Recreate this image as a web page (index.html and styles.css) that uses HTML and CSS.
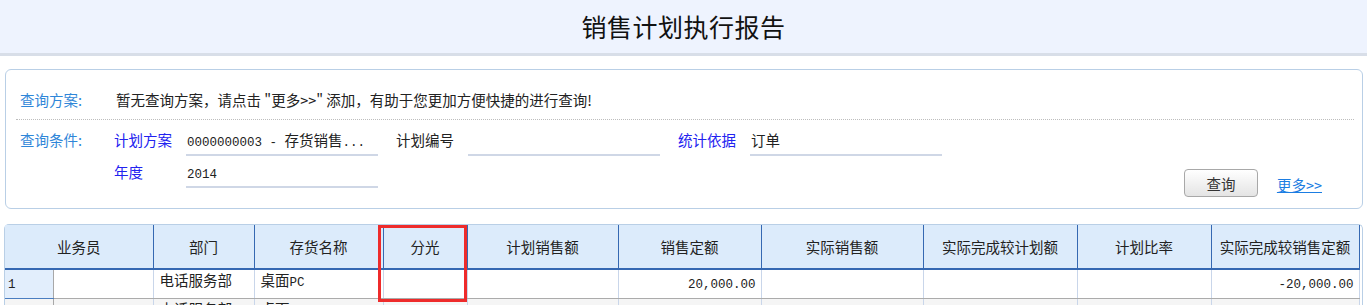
FILE: index.html
```html
<!DOCTYPE html>
<html lang="zh-CN">
<head>
    <meta charset="UTF-8">
    <meta name="viewport" content="width=device-width, initial-scale=1.0">
    <title>销售计划执行报告</title>
    <link rel="stylesheet" href="styles.css">
</head>
<body>
    <div class="report-title">销售计划执行报告</div>

    <div class="query-panel">
        <div class="query-scheme">
            <span class="query-label">查询方案:</span>
            <span class="scheme-tip">暂无查询方案，请点击 "更多&gt;&gt;" 添加，有助于您更加方便快捷的进行查询!</span>
        </div>

        <div class="query-conditions">
            <span class="query-label">查询条件:</span>
            <div class="fields">
                <div class="field-row">
                    <div class="field">
                        <span class="field-label key">计划方案</span>
                        <span class="field-value"><span class="num">0000000003 - </span>存货销售<span class="num">...</span></span>
                    </div>
                    <div class="field">
                        <span class="field-label">计划编号</span>
                        <span class="field-value"></span>
                    </div>
                    <div class="field">
                        <span class="field-label key">统计依据</span>
                        <span class="field-value">订单</span>
                    </div>
                </div>
                <div class="field-row">
                    <div class="field">
                        <span class="field-label key">年度</span>
                        <span class="field-value"><span class="num">2014</span></span>
                    </div>
                </div>
            </div>
            <div class="query-actions">
                <button class="query-btn">查询</button>
                <a href="#" class="more-link">更多&gt;&gt;</a>
            </div>
        </div>
    </div>

    <div class="report-table-wrap">
        <table class="report-table">
            <colgroup>
                <col style="width: 48px">
                <col style="width: 100px">
                <col style="width: 101px">
                <col style="width: 129px">
                <col style="width: 84px">
                <col style="width: 151px">
                <col style="width: 143px">
                <col style="width: 162px">
                <col style="width: 154px">
                <col style="width: 134px">
                <col style="width: 148px">
            </colgroup>
            <thead>
                <tr>
                    <th colspan="2">业务员</th>
                    <th>部门</th>
                    <th>存货名称</th>
                    <th>分光</th>
                    <th>计划销售额</th>
                    <th>销售定额</th>
                    <th>实际销售额</th>
                    <th>实际完成较计划额</th>
                    <th>计划比率</th>
                    <th>实际完成较销售定额</th>
                </tr>
            </thead>
            <tbody>
                <tr>
                    <td class="row-no"><span class="num">1</span></td>
                    <td></td>
                    <td>电话服务部</td>
                    <td>桌面<span class="num">PC</span></td>
                    <td></td>
                    <td></td>
                    <td class="amount"><span class="num">20,000.00</span></td>
                    <td></td>
                    <td></td>
                    <td></td>
                    <td class="amount"><span class="num">-20,000.00</span></td>
                </tr>
                <tr class="alt">
                    <td class="row-no"><span class="num">1</span></td>
                    <td></td>
                    <td>电话服务部</td>
                    <td>桌面<span class="num">PC</span></td>
                    <td></td>
                    <td></td>
                    <td class="amount"><span class="num">20,000.00</span></td>
                    <td></td>
                    <td></td>
                    <td></td>
                    <td class="amount"><span class="num">-20,000.00</span></td>
                </tr>
            </tbody>
        </table>
        <div class="highlight-box"></div>
    </div>
</body>
</html>
```

FILE: styles.css
```css
:root {
    --label-blue: #2f86d8;
    --key-blue: #2222f0;
    --line-blue: #b9cfe6;
    --head-bg: #dcebfb;
    --head-line: #3568b2;
}

* {
    margin: 0;
    padding: 0;
    box-sizing: border-box;
}

body {
    font-family: "Noto Sans CJK SC", "Liberation Sans", sans-serif;
    font-size: 14.5px;
    color: #222;
    background-color: #fff;
    overflow: hidden;
}

.num {
    font-family: "Liberation Mono", monospace;
    font-size: 12.5px;
}

/* title bar */
.report-title {
    height: 56px;
    line-height: 53px;
    background-color: #eef3fe;
    border-bottom: 3px solid #d8dee8;
    text-align: center;
    font-size: 25px;
    letter-spacing: 0.5px;
    color: #111;
}

/* query panel */
.query-panel {
    margin: 13px 4px 0 5px;
    border: 1px solid var(--line-blue);
    border-radius: 6px;
    padding-bottom: 11px;
}

.query-label {
    width: 94px;
    flex-shrink: 0;
    color: var(--label-blue);
    line-height: 24px;
}

.query-scheme {
    display: flex;
    margin: 0 8px 0 10px;
    padding: 18px 0 7px 4px;
    border-bottom: 1px dotted #bdbdbd;
}

.scheme-tip {
    line-height: 24px;
    margin-left: 2px;
}

.query-conditions {
    display: flex;
    padding-left: 14px;
}

.query-conditions .query-label {
    padding-top: 8px;
    line-height: 24px;
}

.fields {
    display: flex;
    flex-direction: column;
    gap: 4px;
    padding: 8px 0 9px;
}

.field-row {
    display: flex;
}

.field {
    display: flex;
    margin-right: 18px;
}

.field-label {
    width: 72px;
    height: 28px;
    line-height: 24px;
}

.field-label.key {
    color: var(--key-blue);
}

.field-value {
    width: 192px;
    height: 28px;
    line-height: 24px;
    padding-left: 1px;
    border-bottom: 2px solid #cfd7e6;
    white-space: nowrap;
}

.query-actions {
    margin-left: auto;
    margin-right: 40px;
    align-self: flex-end;
    display: flex;
    align-items: center;
    gap: 19px;
}

.query-btn {
    width: 74px;
    height: 28px;
    border: 1px solid #a8a8a8;
    border-radius: 4px;
    background: linear-gradient(#ffffff, #e4e4e4);
    font-family: inherit;
    font-size: 14.5px;
    color: #333;
}

.more-link {
    color: #1b7de2;
    text-decoration: underline;
    padding-top: 2px;
}

/* table */
.report-table-wrap {
    position: relative;
    margin: 15px 4px 0 4px;
    border: 1px solid var(--line-blue);
    border-bottom: none;
    border-radius: 5px 5px 0 0;
    padding-right: 3px;
}

.report-table {
    border-collapse: collapse;
    table-layout: fixed;
    width: 1354px;
}

.report-table th {
    height: 44px;
    background-color: var(--head-bg);
    font-weight: normal;
    border-right: 1px solid var(--head-line);
    border-bottom: 2px solid var(--head-line);
    text-align: center;
    white-space: nowrap;
}

.report-table td {
    height: 29px;
    vertical-align: top;
    padding: 1px 6px 0;
    line-height: 18px;
    border-right: 1px solid #c9d6ea;
    border-bottom: 1px solid #ababab;
    white-space: nowrap;
}

.report-table tr.alt td {
    background-color: #f5f5f5;
}

.report-table td.row-no {
    background-color: #e2eefc;
    padding-left: 3px;
    padding-top: 3px;
    border-right-color: #a8a8a8;
    border-bottom-color: #4a7dc0;
}

.report-table td.amount {
    text-align: right;
    padding-right: 5px;
    padding-top: 3px;
}

/* annotation over the column */
.highlight-box {
    position: absolute;
    left: 373px;
    top: 0;
    width: 89px;
    height: 77px;
    border: 3px solid #ee2b2b;
}
```
